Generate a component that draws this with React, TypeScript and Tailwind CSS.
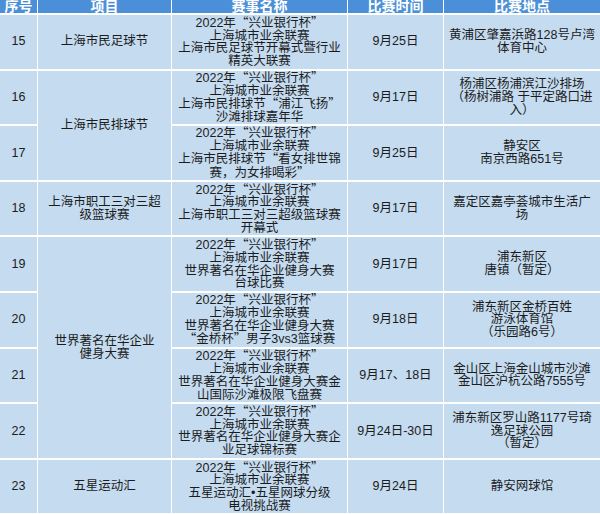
import React from "react";

const Q = ({ c }: { c: string }) => (
  <span className="font-['Noto_Sans_CJK_SC',sans-serif]">{c}</span>
);

const L = ({ children }: { children: React.ReactNode }) => (
  <div className="whitespace-nowrap">{children}</div>
);

const head = (
  <>
    <L>
      2022年<Q c="“" />兴业银行杯<Q c="”" />
    </L>
    <L>上海城市业余联赛</L>
  </>
);

const cell =
  "bg-[#c4dbf0] flex flex-col items-center justify-center text-center overflow-hidden";

const Cell = ({
  lines,
  className = "",
}: {
  lines: React.ReactNode[];
  className?: string;
}) => (
  <div className={`${cell} ${className}`}>
    {lines.map((l, i) => (
      <L key={i}>{l}</L>
    ))}
  </div>
);

const Event = ({ extra }: { extra: React.ReactNode[] }) => (
  <div className={cell}>
    {head}
    {extra.map((l, i) => (
      <L key={i}>{l}</L>
    ))}
  </div>
);

export default function App() {
  return (
    <div className="w-[600px] h-[514px] bg-white overflow-hidden font-['Liberation_Sans','Noto_Sans_CJK_SC',sans-serif] text-[12.5px] leading-[12.7px] text-[#1c1c1c]">
      <div className="grid grid-cols-[37px_133px_175px_95px_156px] grid-rows-[13px_repeat(9,53.6px)] gap-x-[1px] gap-y-[2px]">
        {["序号", "项目", "赛事名称", "比赛时间", "比赛地点"].map((h) => (
          <div
            key={h}
            className="bg-[#4a8fd7] text-white font-bold text-[14px] leading-[14px] flex items-start justify-center overflow-hidden"
          >
            <span className="-mt-[2px] font-['Noto_Sans_CJK_SC',sans-serif]">{h}</span>
          </div>
        ))}

        {/* 15 */}
        <Cell lines={["15"]} />
        <Cell lines={["上海市民足球节"]} />
        <Event extra={["上海市民足球节开幕式暨行业", "精英大联赛"]} />
        <Cell lines={["9月25日"]} />
        <Cell lines={["黄浦区肇嘉浜路128号卢湾", "体育中心"]} />

        {/* 16 */}
        <Cell lines={["16"]} />
        <Cell lines={["上海市民排球节"]} className="row-span-2" />
        <Event
          extra={[
            <>
              上海市民排球节<Q c="“" />浦江飞扬<Q c="”" />
            </>,
            "沙滩排球嘉年华",
          ]}
        />
        <Cell lines={["9月17日"]} />
        <Cell
          lines={["杨浦区杨浦滨江沙排场", "（杨树浦路  于平定路口进", "入）"]}
        />

        {/* 17 */}
        <Cell lines={["17"]} />
        <Event
          extra={[
            <>
              上海市民排球节<Q c="“" />看女排世锦
            </>,
            <>
              赛，为女排喝彩<Q c="”" />
            </>,
          ]}
        />
        <Cell lines={["9月25日"]} />
        <Cell lines={["静安区", "南京西路651号"]} />

        {/* 18 */}
        <Cell lines={["18"]} />
        <Cell lines={["上海市职工三对三超", "级篮球赛"]} />
        <Event extra={["上海市职工三对三超级篮球赛", "开幕式"]} />
        <Cell lines={["9月17日"]} />
        <Cell lines={["嘉定区嘉亭荟城市生活广", "场"]} />

        {/* 19 */}
        <Cell lines={["19"]} />
        <Cell
          lines={["世界著名在华企业", "健身大赛"]}
          className="row-span-4"
        />
        <Event extra={["世界著名在华企业健身大赛", "台球比赛"]} />
        <Cell lines={["9月17日"]} />
        <Cell lines={["浦东新区", "唐镇（暂定）"]} />

        {/* 20 */}
        <Cell lines={["20"]} />
        <Event
          extra={[
            "世界著名在华企业健身大赛",
            <>
              <Q c="“" />金桥杯<Q c="”" />男子3vs3篮球赛
            </>,
          ]}
        />
        <Cell lines={["9月18日"]} />
        <Cell lines={["浦东新区金桥百姓", "游泳体育馆", "（乐园路6号）"]} />

        {/* 21 */}
        <Cell lines={["21"]} />
        <Event extra={["世界著名在华企业健身大赛金", "山国际沙滩极限飞盘赛"]} />
        <Cell lines={["9月17、18日"]} />
        <Cell lines={["金山区上海金山城市沙滩", "金山区沪杭公路7555号"]} />

        {/* 22 */}
        <Cell lines={["22"]} />
        <Event extra={["世界著名在华企业健身大赛企", "业足球锦标赛"]} />
        <Cell lines={["9月24日-30日"]} />
        <Cell lines={["浦东新区罗山路1177号琦", "逸足球公园", "（暂定）"]} />

        {/* 23 */}
        <Cell lines={["23"]} />
        <Cell lines={["五星运动汇"]} />
        <Event extra={["五星运动汇•五星网球分级", "电视挑战赛"]} />
        <Cell lines={["9月24日"]} />
        <Cell lines={["静安网球馆"]} />
      </div>
    </div>
  );
}
